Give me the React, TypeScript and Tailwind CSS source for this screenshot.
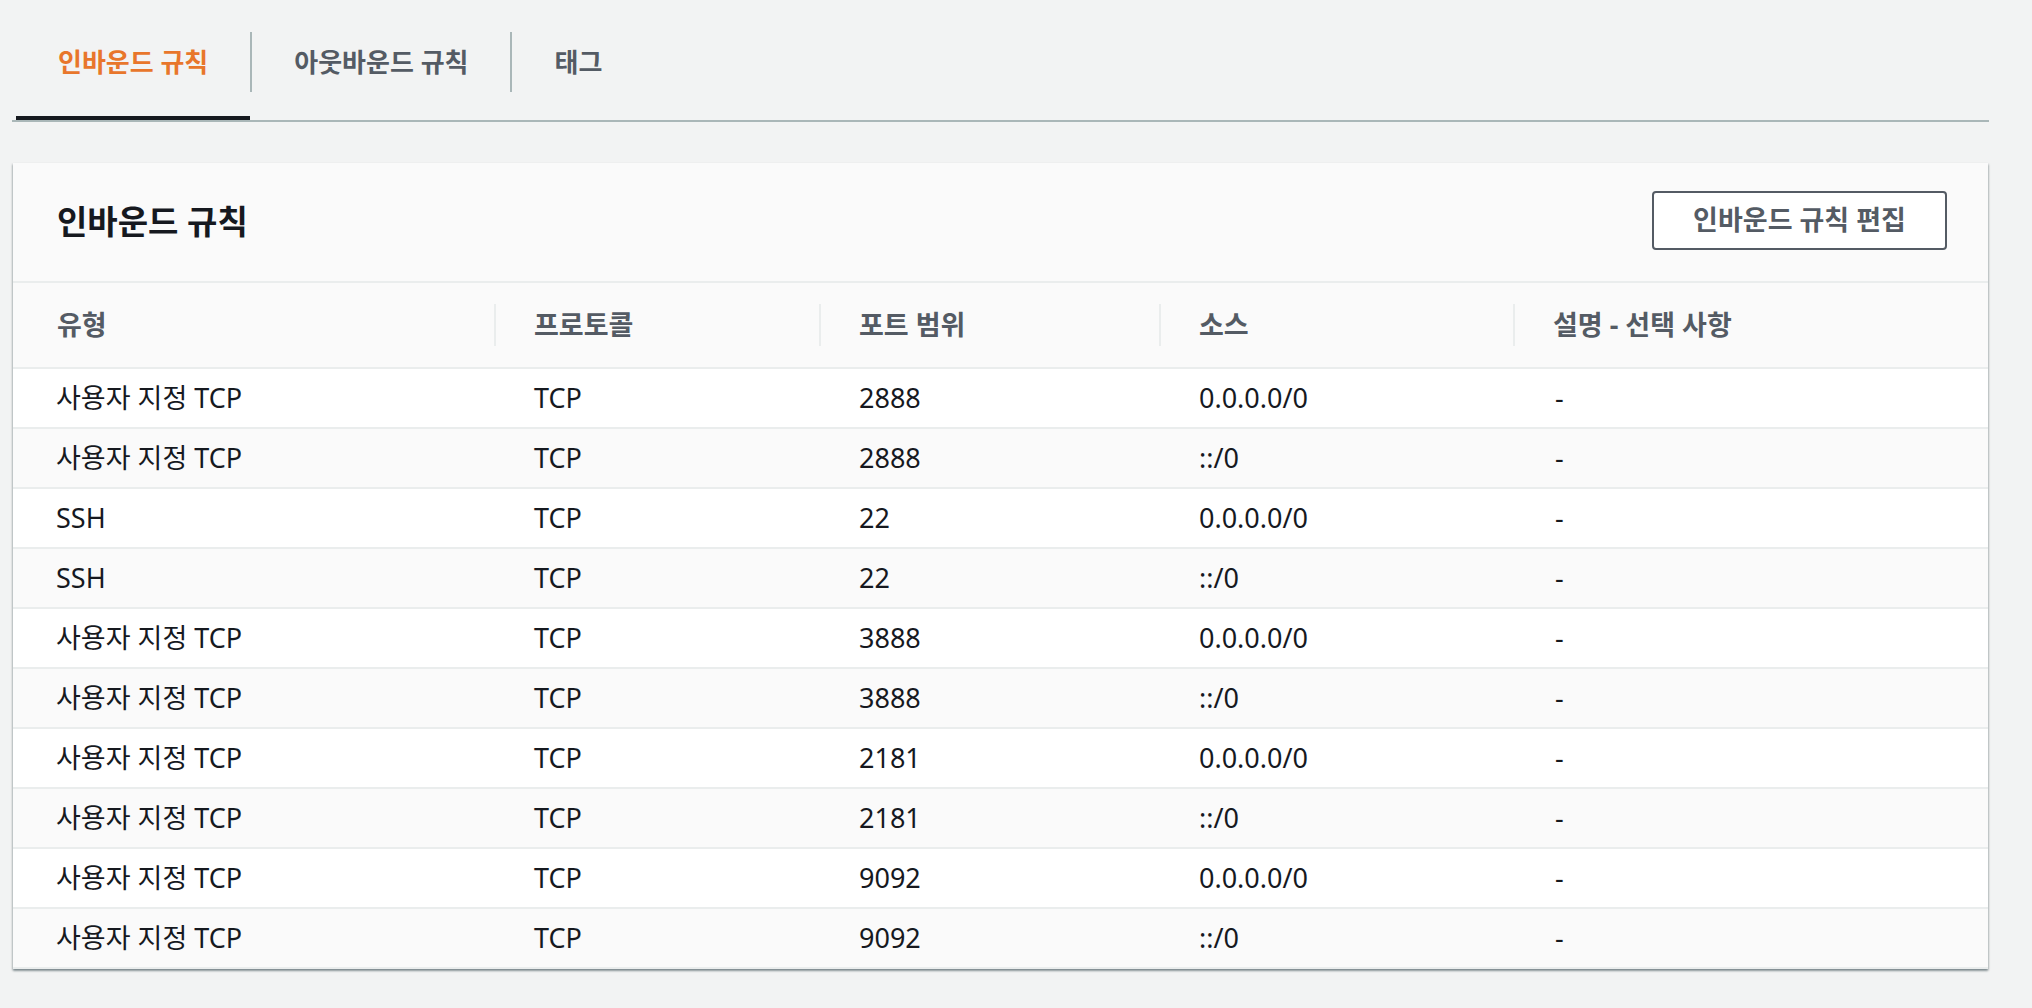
const rules = [
  { type: '사용자 지정 TCP', protocol: 'TCP', port: '2888', source: '0.0.0.0/0', desc: '-' },
  { type: '사용자 지정 TCP', protocol: 'TCP', port: '2888', source: '::/0', desc: '-' },
  { type: 'SSH', protocol: 'TCP', port: '22', source: '0.0.0.0/0', desc: '-' },
  { type: 'SSH', protocol: 'TCP', port: '22', source: '::/0', desc: '-' },
  { type: '사용자 지정 TCP', protocol: 'TCP', port: '3888', source: '0.0.0.0/0', desc: '-' },
  { type: '사용자 지정 TCP', protocol: 'TCP', port: '3888', source: '::/0', desc: '-' },
  { type: '사용자 지정 TCP', protocol: 'TCP', port: '2181', source: '0.0.0.0/0', desc: '-' },
  { type: '사용자 지정 TCP', protocol: 'TCP', port: '2181', source: '::/0', desc: '-' },
  { type: '사용자 지정 TCP', protocol: 'TCP', port: '9092', source: '0.0.0.0/0', desc: '-' },
  { type: '사용자 지정 TCP', protocol: 'TCP', port: '9092', source: '::/0', desc: '-' },
];

const tabs = [
  { label: '인바운드 규칙', active: true },
  { label: '아웃바운드 규칙', active: false },
  { label: '태그', active: false },
];

const columns = ['유형', '프로토콜', '포트 범위', '소스', '설명 - 선택 사항'];

const gridCols = 'grid grid-cols-[481px_325px_340px_354px_1fr]';

export default function App() {
  return (
    <div className="min-h-screen bg-[#f2f3f3] pl-[12px] pr-[43px] [font-family:'Noto_Sans','Noto_Sans_CJK_KR',sans-serif]">
      {/* tabs */}
      <div className="flex border-b-2 border-[#aab7b8] pl-[4px]">
        {tabs.map((tab, i) => (
          <div key={tab.label} className="flex items-center">
            {i > 0 && <div className="mt-[4px] h-[60px] w-[2px] bg-[#aab7b8]" />}
            <button
              type="button"
              className={`flex h-[120px] items-center border-b-4 px-[42px] pt-[8px] text-[26px] font-bold ${
                tab.active ? 'border-[#16191f] text-[#e8762b]' : 'border-transparent text-[#545b64]'
              }`}
            >
              {tab.label}
            </button>
          </div>
        ))}
      </div>

      {/* card */}
      <div className="mx-[1px] mt-[41px] bg-white shadow-[0_2px_2px_0_rgba(0,28,36,0.35),1px_1px_2px_0_rgba(0,28,36,0.15),-1px_1px_2px_0_rgba(0,28,36,0.15)]">
        <div className="flex h-[120px] items-center justify-between border-b-2 border-[#eaeded] bg-[#fafafa] pl-[44px] pr-[41px]">
          <h2 className="text-[33px] font-bold text-[#16191f]">인바운드 규칙</h2>
          <button
            type="button"
            className="mb-[4px] h-[59px] w-[295px] rounded-[4px] border-2 border-[#545b64] bg-white text-[27px] font-bold text-[#545b64]"
          >
            인바운드 규칙 편집
          </button>
        </div>

        <div className={`${gridCols} h-[86px] border-b-2 border-[#eaeded] bg-[#fafafa] text-[27px] font-bold text-[#545b64]`}>
          {columns.map((col, i) => (
            <div key={col} className="flex items-center">
              {i > 0 && <div className="h-[42px] w-[2px] bg-[#eaeded]" />}
              <span className={i === 0 ? 'pl-[44px]' : 'pl-[38px]'}>{col}</span>
            </div>
          ))}
        </div>

        {rules.map((r, idx) => (
          <div
            key={idx}
            className={`${gridCols} h-[60px] border-b-2 border-[#eaeded] text-[27px] text-[#16191f] ${
              idx % 2 === 1 ? 'bg-[#fafafa]' : 'bg-white'
            }`}
          >
            <div className="flex items-center pl-[43px]">{r.type}</div>
            <div className="flex items-center pl-[40px]">{r.protocol}</div>
            <div className="flex items-center pl-[40px]">{r.port}</div>
            <div className="flex items-center pl-[40px]">{r.source}</div>
            <div className="flex items-center pl-[42px]">{r.desc}</div>
          </div>
        ))}
      </div>
    </div>
  );
}
